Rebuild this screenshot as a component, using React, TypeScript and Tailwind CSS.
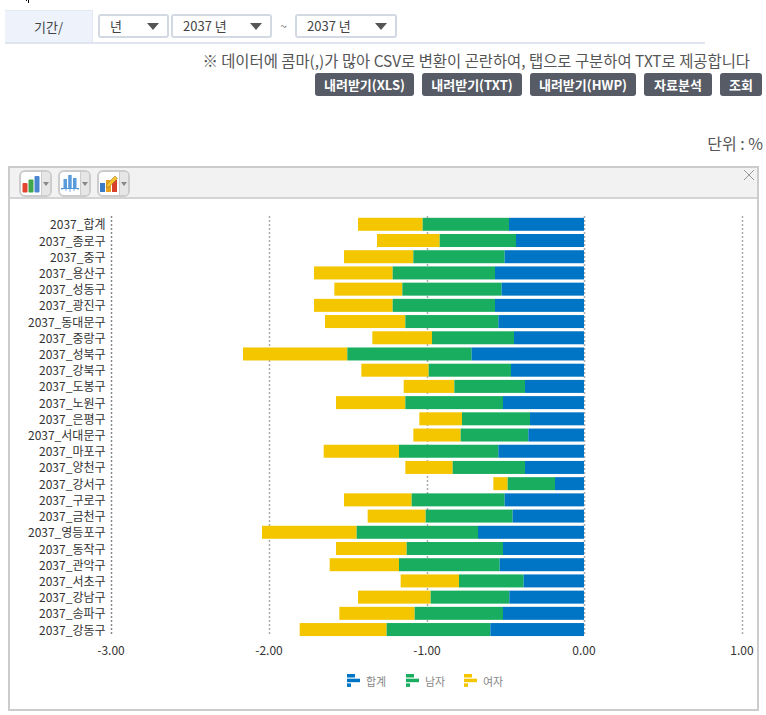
const FONT = "font-['Noto_Sans_CJK_KR','Noto_Sans',sans-serif]"

// x positions read off the chart: yellow start, green start, blue start
const rows: [string, number, number, number][] = [
  ['합계', 384, 578, 837],
  ['종로구', 441, 629, 858],
  ['중구', 342, 550, 824],
  ['용산구', 252, 488, 795],
  ['성동구', 313, 517, 815],
  ['광진구', 252, 488, 795],
  ['동대문구', 285, 526, 805],
  ['중랑구', 427, 606, 852],
  ['성북구', 39, 352, 725],
  ['강북구', 394, 596, 843],
  ['도봉구', 521, 673, 885],
  ['노원구', 318, 526, 819],
  ['은평구', 568, 696, 900],
  ['서대문구', 550, 692, 895],
  ['마포구', 281, 507, 805],
  ['양천구', 526, 668, 885],
  ['강서구', 790, 833, 975],
  ['구로구', 342, 545, 824],
  ['금천구', 413, 587, 848],
  ['영등포구', 96, 380, 744],
  ['동작구', 318, 530, 819],
  ['관악구', 299, 507, 809],
  ['서초구', 512, 687, 881],
  ['강남구', 384, 602, 838],
  ['송파구', 328, 554, 819],
  ['강동구', 209, 470, 781],
]

const px = (z: number) => 230 + z / 3
const ZERO = 584
const BLUE = '#0074c5'
const GREEN = '#19ae5f'
const YELLOW = '#f4c600'

function Select({ label, width }: { label: string; width: string }) {
  return (
    <div className={`${width} h-[24px] flex items-center justify-between pl-[10px] pr-[8px] bg-white border-2 border-[#d3d9e3] rounded-[3px] text-[13px] text-[#444]`}>
      <span>{label}</span>
      <svg width="12" height="7" viewBox="0 0 12 7">
        <path d="M0 0h12L6 7z" fill="#555" />
      </svg>
    </div>
  )
}

function Button({ label, width }: { label: string; width: string }) {
  return (
    <div className={`${width} h-[23px] flex items-center justify-center bg-[#565b66] rounded-[3px] text-[13px] font-bold text-white whitespace-nowrap`}>
      {label}
    </div>
  )
}

function ToolButton({ children }: { children: React.ReactNode }) {
  return (
    <div className="w-[33px] h-[27px] flex border-2 border-[#ccc] rounded-[6px] bg-white overflow-hidden">
      <div className="flex-1 flex items-center justify-center">{children}</div>
      <div className="w-[9px] flex items-center justify-center bg-[#e6e6e6] border-l border-[#ccc]">
        <svg width="6" height="4" viewBox="0 0 6 4">
          <path d="M0 0h6L3 4z" fill="#888" />
        </svg>
      </div>
    </div>
  )
}

function Chart() {
  return (
    <svg width="747" height="510" viewBox="10 199 747 510" className="block">
      {[111.5, 269.5, 427.5, 584.5, 742.5].map((x, i) => (
        <line key={x} x1={x} x2={x} y1="216" y2="636" stroke={i === 0 ? '#888' : '#aaa'} strokeWidth="1.5" strokeDasharray="2 2" />
      ))}
      {rows.map(([name, y0, g0, b0], i) => {
        const cy = 224.3 + i * 16.21
        const y = cy - 6.5
        return (
          <g key={name}>
            <text x="105.5" y={cy + 5} textAnchor="end" fontSize="12" fill="#333">{`2037_${name}`}</text>
            <rect x={px(y0)} y={y} width={px(g0) - px(y0)} height="13" fill={YELLOW} />
            <rect x={px(g0)} y={y} width={px(b0) - px(g0)} height="13" fill={GREEN} />
            <rect x={px(b0)} y={y} width={ZERO - px(b0)} height="13" fill={BLUE} />
          </g>
        )
      })}
      {[
        ['-3.00', 111],
        ['-2.00', 269],
        ['-1.00', 427],
        ['0.00', 584],
        ['1.00', 742],
      ].map(([t, x]) => (
        <text key={t} x={x} y="655" textAnchor="middle" fontSize="12" fill="#333">{t}</text>
      ))}
      {[
        ['합계', 347, BLUE],
        ['남자', 406, GREEN],
        ['여자', 464, YELLOW],
      ].map(([t, x, c]) => (
        <g key={t as string} transform={`translate(${x} 674)`}>
          <rect x="0" y="0" width="8" height="3.5" fill={c as string} />
          <rect x="0" y="4.7" width="13" height="3.5" fill={c as string} />
          <rect x="0" y="9.4" width="4" height="3.5" fill={c as string} />
          <text x="19" y="12" fontSize="11" fill="#888">{t}</text>
        </g>
      ))}
    </svg>
  )
}

export default function App() {
  return (
    <div className={`${FONT} w-[766px] h-[715px] bg-white overflow-hidden`}>
      <div className="h-[10px] flex gap-[1px] pl-[26px] items-start">
        <div className="w-[1px] h-[1px] bg-black" />
        <div className="w-[1px] h-[3px] bg-black" />
      </div>
      <div className="ml-[5px] w-[700px] h-[34px] flex items-center border-b-2 border-[#dfe4ee]">
        <div className="w-[88px] h-full flex items-center justify-center bg-[#eef3fb] border-t border-r border-[#e3e8f1] text-[13px] text-[#444]">
          기간/
        </div>
        <div className="flex items-center ml-[5px] gap-[2px]">
          <Select label="년" width="w-[71px]" />
          <Select label="2037 년" width="w-[101px]" />
          <span className="w-[19px] text-center text-[12px] text-[#777]">~</span>
          <Select label="2037 년" width="w-[102px]" />
        </div>
      </div>
      <div className="pr-[16px] mt-[5px] text-right text-[15.4px] leading-[22px] text-[#555] whitespace-nowrap">
        ※ 데이터에 콤마(,)가 많아 CSV로 변환이 곤란하여, 탭으로 구분하여 TXT로 제공합니다
      </div>
      <div className="flex justify-end gap-[8px] pr-[4px] mt-[2px]">
        <Button label="내려받기(XLS)" width="w-[99px]" />
        <Button label="내려받기(TXT)" width="w-[100px]" />
        <Button label="내려받기(HWP)" width="w-[106px]" />
        <Button label="자료분석" width="w-[68px]" />
        <Button label="조회" width="w-[42px]" />
      </div>
      <div className="pr-[3px] mt-[35px] text-right text-[16px] leading-[24px] text-[#555]">단위 : %</div>
      <div className="ml-[8px] mt-[11px] w-[751px] h-[545px] border-2 border-[#ccc]">
        <div className="relative h-[31px] flex items-center gap-[6px] pl-[9px] pt-[2px] bg-[#f2f2f2] border-b-2 border-[#d4d4d4]">
          <ToolButton>
            <svg width="18" height="18" viewBox="0 0 18 18">
              <rect x="0.5" y="8" width="5" height="9.5" rx="1" fill="#e5452f" />
              <rect x="6.5" y="4.5" width="5" height="13" rx="1" fill="#3fa64a" />
              <rect x="12.5" y="1" width="5" height="16.5" rx="1" fill="#4a86d0" />
            </svg>
          </ToolButton>
          <ToolButton>
            <svg width="20" height="20" viewBox="0 0 20 20">
              <rect x="3.5" y="5" width="3.5" height="9" fill="#5a9bdc" />
              <rect x="8.2" y="1" width="3.5" height="13" fill="#5a9bdc" />
              <rect x="13" y="4" width="3.5" height="10" fill="#5a9bdc" />
              <path d="M1 14.5h18" stroke="#4f94d8" />
              <path d="M2 15v1M6 15v2M10 15v3M14 15v2M18 15v1" stroke="#7fb2e2" />
            </svg>
          </ToolButton>
          <ToolButton>
            <svg width="20" height="20" viewBox="0 0 20 20">
              <rect x="1" y="9" width="5" height="9" fill="#3a7cc8" />
              <rect x="7" y="6" width="5" height="12" fill="#e8a020" />
              <rect x="13" y="6" width="5" height="12" fill="#d8402a" />
              <path d="M8 10l8-8 2.5 2.5-8 8-3.5 1z" fill="#f2c230" stroke="#a0701a" strokeWidth="0.5" />
            </svg>
          </ToolButton>
          <svg className="absolute top-[1px] right-[2px]" width="12" height="12" viewBox="0 0 12 12">
            <path d="M1 1l10 10M11 1L1 11" stroke="#999" strokeWidth="1" fill="none" />
          </svg>
        </div>
        <Chart />
      </div>
    </div>
  )
}
